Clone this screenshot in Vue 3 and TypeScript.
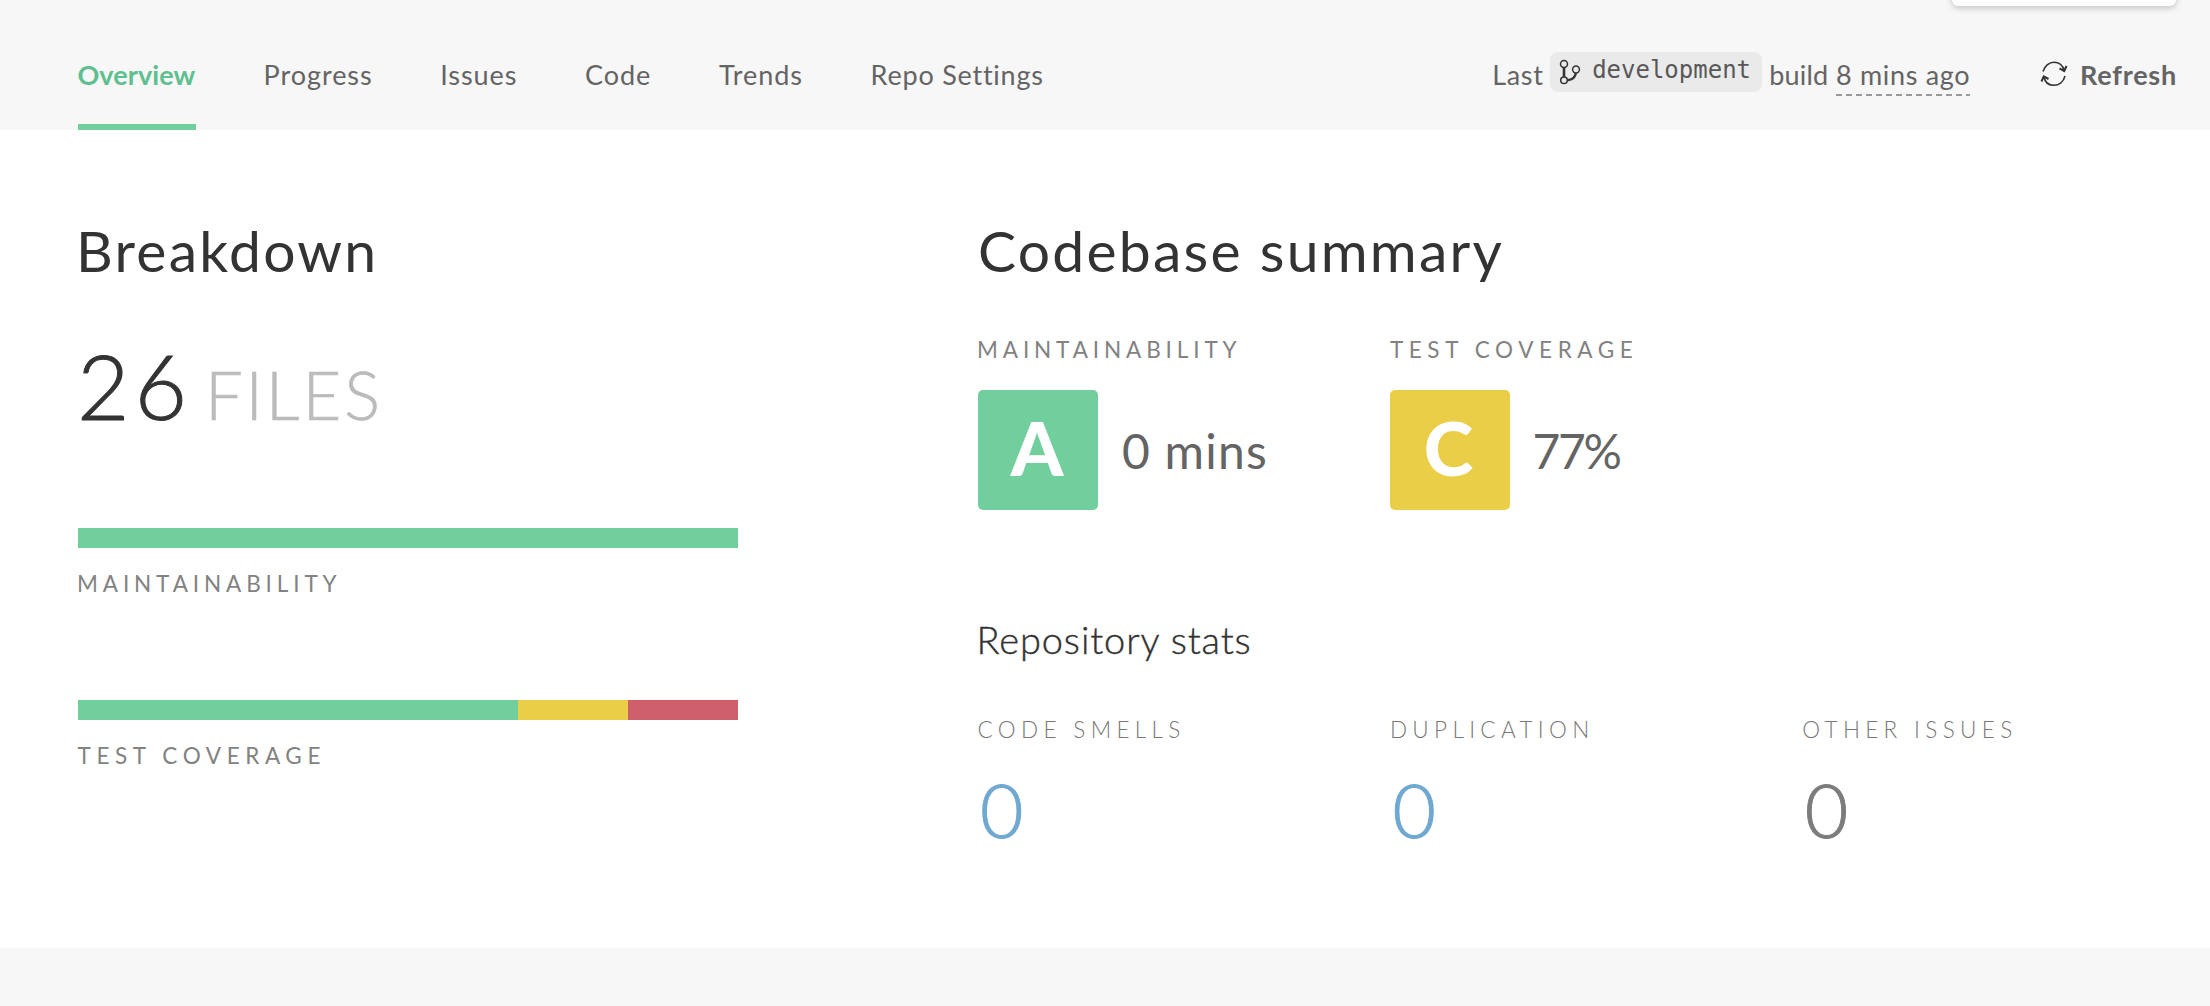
<script setup lang="ts">
interface Tab { label: string; active?: boolean; tight?: boolean }
interface Segment { tone: string; share: number }
interface Bar { label: string; segments: Segment[] }
interface Grade { label: string; letter: string; tone: string; value: string }
interface Stat { label: string; value: number; link: boolean }

const tabs: Tab[] = [
  { label: 'Overview', active: true },
  { label: 'Progress' },
  { label: 'Issues' },
  { label: 'Code' },
  { label: 'Trends' },
  { label: 'Repo Settings', tight: true },
]

const bars: Bar[] = [
  { label: 'Maintainability', segments: [{ tone: 'green', share: 660 }] },
  {
    label: 'Test coverage',
    segments: [
      { tone: 'green', share: 440 },
      { tone: 'yellow', share: 110 },
      { tone: 'red', share: 110 },
    ],
  },
]

const grades: Grade[] = [
  { label: 'Maintainability', letter: 'A', tone: 'green', value: '0 mins' },
  { label: 'Test coverage', letter: 'C', tone: 'yellow', value: '77%' },
]

const stats: Stat[] = [
  { label: 'Code smells', value: 0, link: true },
  { label: 'Duplication', value: 0, link: true },
  { label: 'Other issues', value: 0, link: false },
]
</script>

<template>
  <div class="page">
    <div class="popover"></div>
    <header class="header">
      <nav class="tabs">
        <a v-for="tab in tabs" :key="tab.label" class="tab" :class="{ active: tab.active, tight: tab.tight }">{{ tab.label }}</a>
      </nav>
      <div class="status">
        <span class="word last">Last</span>
        <span class="branch">
          <svg class="branch-icon" width="22" height="26" viewBox="0 0 22 26" fill="none" stroke="#333">
            <circle cx="5" cy="5" r="3.5" stroke-width="1.5" />
            <circle cx="5" cy="21.2" r="3.3" stroke-width="1.5" />
            <circle cx="17" cy="10.5" r="3.4" stroke-width="1.5" />
            <path d="M5 8.6V18" stroke-width="2.6" />
            <path d="M8.2 21.2C13 20.8 16.4 18.5 16.8 14" stroke-width="2.4" />
          </svg>
          <span class="branch-name">development</span>
        </span>
        <span class="word build">build</span>
        <span class="word time">8 mins ago</span>
        <svg class="refresh-icon" width="28" height="26" viewBox="0 0 28 26" fill="none" stroke="#333" stroke-width="1.6">
          <path d="M3 10.5C4.500 5 9 1.200 14 1.200C19 1.200 23 4.500 24 9.500" />
          <path d="M19.500 7.300L24.200 10L26.500 5" stroke-width="2" />
          <path d="M25 15C23.500 21 19 24.300 14 24.300C9 24.300 5 21.500 4 16" />
          <path d="M1.500 20.500L3.700 15.400L8.500 18" stroke-width="2" />
        </svg>
        <a class="refresh">Refresh</a>
      </div>
    </header>

    <main class="content">
      <section class="breakdown">
        <h2 class="title">Breakdown</h2>
        <div class="files"><span class="count">26</span><span class="unit">FILES</span></div>
        <div v-for="bar in bars" :key="bar.label" class="bar-block">
          <div class="bar">
            <i v-for="seg in bar.segments" :key="seg.tone" :class="seg.tone" :style="{ flexGrow: seg.share }"></i>
          </div>
          <div class="caption" :class="{ coverage: bar.label === 'Test coverage' }">{{ bar.label }}</div>
        </div>
      </section>

      <section class="summary">
        <h2 class="title summary-title">Codebase summary</h2>
        <div class="columns grades">
          <div v-for="g in grades" :key="g.label" class="column">
            <div class="caption" :class="{ coverage: g.label === 'Test coverage' }">{{ g.label }}</div>
            <div class="grade">
              <span class="tile" :class="g.tone">{{ g.letter }}</span>
              <span class="grade-value" :class="{ percent: g.letter === 'C' }">{{ g.value }}</span>
            </div>
          </div>
        </div>
        <h3 class="subtitle">Repository stats</h3>
        <div class="columns stats">
          <div v-for="s in stats" :key="s.label" class="column">
            <div class="caption light">{{ s.label }}</div>
            <div class="stat" :class="{ link: s.link }">{{ s.value }}</div>
          </div>
        </div>
      </section>
    </main>
  </div>
</template>

<style>
body {
  background: #f7f7f7;
}
</style>

<style scoped>
.page {
  position: relative;
  width: 2210px;
  height: 1006px;
  overflow: hidden;
  background: #f7f7f7;
  color: #333;
  font-family: Lato, sans-serif;
}
.popover {
  position: absolute;
  top: -40px;
  left: 1952px;
  width: 224px;
  height: 46px;
  border-radius: 6px;
  background: #fff;
  box-shadow: 0 2px 6px rgba(0, 0, 0, 0.22);
}
.header {
  display: flex;
  justify-content: space-between;
  box-sizing: border-box;
  height: 130px;
  padding: 0 33px 0 78px;
  font-size: 27px;
  color: #646464;
}
.tabs {
  display: flex;
  gap: 67.6px;
}
.tab {
  box-sizing: border-box;
  height: 130px;
  padding-top: 18px;
  line-height: 113px;
  letter-spacing: 0.95px;
  white-space: nowrap;
}
.tab.tight {
  letter-spacing: 0.78px;
}
.tab.active {
  width: 118px;
  border-bottom: 6px solid #71cf9d;
  color: #5fbf8e;
  font-weight: 700;
  letter-spacing: 0.08px;
  text-indent: -0.5px;
}
.status {
  display: flex;
  align-items: flex-start;
  white-space: nowrap;
}
.word,
.refresh {
  margin-top: 58px;
  line-height: 33px;
  letter-spacing: 0.68px;
}
.branch {
  display: flex;
  box-sizing: border-box;
  width: 212px;
  height: 40px;
  margin: 52px 7px 0 6.6px;
  padding-left: 9px;
  border-radius: 8px;
  background: #eaeaea;
}
.branch-icon {
  margin: 7px 11px 0 0;
}
.branch-name {
  font-family: "DejaVu Sans Mono", monospace;
  font-size: 24px;
  line-height: 36px;
  color: #585858;
}
.build {
  margin-right: 7.5px;
  letter-spacing: 0.24px;
}
.time {
  width: 134px;
  height: 38px;
  background: repeating-linear-gradient(90deg, #999 0 6px, transparent 6px 10px) left bottom / 100% 2px no-repeat;
}
.refresh-icon {
  margin: 61px 12px 0 70px;
}
.refresh {
  font-weight: 700;
  letter-spacing: 0.78px;
}
.content {
  display: flex;
  gap: 240px;
  box-sizing: border-box;
  height: 818px;
  padding: 87px 0 0 78px;
  background: #fff;
}
.breakdown {
  flex: none;
  width: 660px;
}
.summary {
  flex: none;
}
.title {
  margin: 0;
  font-size: 57px;
  font-weight: 400;
  line-height: 67px;
  letter-spacing: 2.25px;
  text-indent: -2px;
}
.summary-title {
  text-indent: 0;
}
.files {
  margin-top: 47px;
  height: 108px;
  line-height: 108px;
  font-weight: 300;
}
.count {
  margin-left: -1px;
  font-size: 90.5px;
  letter-spacing: 5px;
  -webkit-text-stroke: 1px #333;
}
.unit {
  margin-left: 13px;
  font-size: 67px;
  letter-spacing: 2.8px;
  color: #bbb;
  -webkit-text-stroke: 0.6px #bbb;
}
.bar-block {
  margin-top: 89px;
}
.bar-block + .bar-block {
  margin-top: 103px;
}
.bar {
  display: flex;
  height: 20px;
  margin-bottom: 22px;
}
.bar i {
  flex-basis: 0;
}
.green {
  background: #71cf9d;
}
.yellow {
  background: #ebce47;
}
.red {
  background: #cf5f6b;
}
.caption {
  font-size: 22.5px;
  line-height: 27px;
  letter-spacing: 4.88px;
  text-indent: -1px;
  text-transform: uppercase;
  white-space: nowrap;
  color: #828282;
}
.caption.coverage {
  letter-spacing: 5.6px;
  text-indent: -0.5px;
}
.caption.light {
  font-weight: 300;
  letter-spacing: 5.35px;
  text-indent: -0.5px;
  color: #787878;
}
.columns {
  display: flex;
}
.column {
  flex: none;
  width: 412.4px;
}
.grades {
  margin-top: 52px;
}
.grade {
  display: flex;
  align-items: center;
  margin-top: 27px;
}
.tile {
  width: 120px;
  height: 120px;
  border-radius: 5px;
  color: #fff;
  font-size: 75px;
  font-weight: 900;
  line-height: 115px;
  text-align: center;
  text-indent: -2px;
}
.tile.yellow {
  text-indent: -4px;
}
.grade-value {
  margin: 2px 0 0 24px;
  font-size: 48px;
  line-height: 58px;
  letter-spacing: 1.22px;
  color: #646464;
}
.grade-value.percent {
  margin-left: 22px;
  letter-spacing: -2.3px;
}
.subtitle {
  margin: 106px 0 0;
  font-size: 38px;
  font-weight: 300;
  line-height: 46px;
  letter-spacing: 0.88px;
  text-indent: -1.5px;
  -webkit-text-stroke: 0.4px #333;
}
.stats {
  margin-top: 54px;
}
.stat {
  margin: 21px 0 0 2px;
  font-size: 75px;
  font-weight: 300;
  line-height: 90px;
  color: #7c7c7c;
  -webkit-text-stroke: 1px currentColor;
}
.stat.link {
  color: #6fa8d0;
}
</style>
